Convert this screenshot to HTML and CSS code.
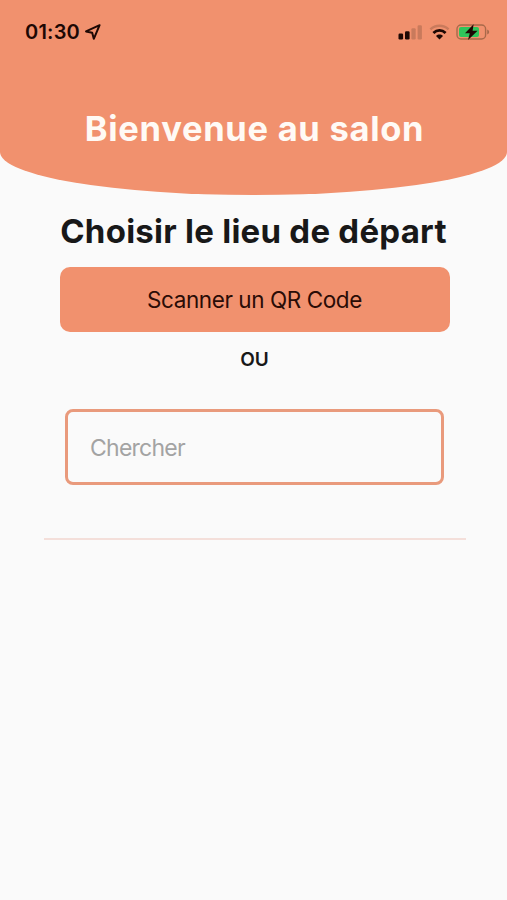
FILE: index.html
```html
<!DOCTYPE html>
<html lang="fr">
<head>
    <meta charset="UTF-8">
    <meta name="viewport" content="width=device-width, initial-scale=1.0">
    <title>Bienvenue au salon</title>
    <link rel="stylesheet" href="styles.css">
</head>
<body>
    <header class="header">
        <div class="status-bar">
            <span class="time">01:30</span>
            <svg class="location" width="18" height="18" viewBox="0 0 18 18">
                <path d="M15.6 2.2 L2 8.4 L8.2 9.8 L9.8 15.8 Z" fill="none" stroke="#1d0804" stroke-width="2" stroke-linejoin="round"/>
            </svg>
            <div class="status-icons">
                <svg width="25" height="16" viewBox="0 0 25 16">
                    <rect x="0.5" y="9.5" width="4.6" height="5.9" rx="1.2" fill="#1d0804"/>
                    <rect x="7" y="7.3" width="4.6" height="8.1" rx="1.2" fill="#1d0804"/>
                    <rect x="13.4" y="4.3" width="4.3" height="11.1" rx="1.2" fill="#c97a5c"/>
                    <rect x="19.6" y="1.2" width="4.3" height="14.2" rx="1.2" fill="#c97a5c"/>
                </svg>
                <svg class="wifi" width="21" height="16" viewBox="0 0 21 16">
                    <path d="M1.4 5.4 C6.6 0.6 14.4 0.6 19.6 5.4" fill="none" stroke="#c97a5c" stroke-width="2.5"/>
                    <path d="M4.4 8.9 C8 5.5 13 5.5 16.6 8.9" fill="none" stroke="#1d0804" stroke-width="2.8"/>
                    <path d="M10.5 15.6 L7 12 C9 10.1 12 10.1 14 12 Z" fill="#1d0804"/>
                </svg>
                <svg class="battery" width="34" height="18" viewBox="0 0 34 18">
                    <rect x="1" y="2" width="28.6" height="14" rx="4" fill="none" stroke="#a8694a" stroke-width="1.4"/>
                    <path d="M31.2 6.4 Q33.2 7.2 33.2 9 Q33.2 10.8 31.2 11.6 Z" fill="#a8694a"/>
                    <rect x="3" y="4" width="20" height="10" rx="2" fill="#2fc45b"/>
                    <path d="M17.6 1.2 L9 10.2 L13.8 10.2 L12 17 L21.6 7.8 L16.6 7.8 Z" fill="#1d0804"/>
                </svg>
            </div>
        </div>
        <h1>Bienvenue au salon</h1>
    </header>

    <main class="content">
        <h2>Choisir le lieu de départ</h2>
        <button class="scan">Scanner un QR Code</button>
        <p class="or">OU</p>
        <input class="search" type="text" placeholder="Chercher">
        <hr class="separator">
    </main>
</body>
</html>
```

FILE: styles.css
```css
* {
    box-sizing: border-box;
}

body {
    font-family: Inter, "Liberation Sans", sans-serif;
    margin: 0;
    min-height: 900px;
    background-color: #fafafa;
    color: #181818;
}

.header {
    height: 195px;
    background: #f1916e;
    border-radius: 0 0 50% 50% / 0 0 43px 43px;
}

.status-bar {
    display: flex;
    align-items: center;
    height: 64px;
    padding: 0 17px 0 25px;
    color: #1d0804;
}

.time {
    width: 59px;
    font-size: 20px;
    font-weight: 600;
    letter-spacing: 0.2px;
}

.status-icons {
    display: flex;
    align-items: center;
    margin-left: auto;
}

.wifi {
    margin-left: 6px;
}

.battery {
    margin-left: 6px;
}

h1 {
    margin: 44px 0 0;
    padding-left: 2px;
    font-size: 34.5px;
    line-height: 42px;
    font-weight: 700;
    letter-spacing: 0.7px;
    text-align: center;
    color: #fffaf5;
}

.content {
    display: flex;
    flex-direction: column;
    align-items: center;
    padding-left: 2px;
}

h2 {
    margin: 15px 2px 0 0;
    font-size: 33px;
    line-height: 42px;
    font-weight: 650;
    letter-spacing: 0.25px;
    white-space: nowrap;
}

.scan {
    width: 390px;
    height: 65px;
    margin-top: 15px;
    padding: 0;
    border: none;
    border-radius: 10px;
    background: #f1916e;
    color: #2a0c06;
    font-family: inherit;
    font-size: 22.5px;
    letter-spacing: -0.42px;
}

.or {
    margin: 16px 0 0;
    font-size: 19px;
    line-height: 24px;
    font-weight: 600;
}

.search {
    width: 379px;
    height: 76px;
    margin-top: 37px;
    padding: 1px 22px 0;
    border: 3px solid #e99a7c;
    border-radius: 8px;
    background: transparent;
    font-family: inherit;
    font-size: 23px;
    letter-spacing: -0.75px;
}

.search::placeholder {
    color: #a3a3a3;
}

.separator {
    width: 422px;
    height: 2px;
    margin: 53px 0 0;
    border: none;
    background: #f4dfda;
}
```
